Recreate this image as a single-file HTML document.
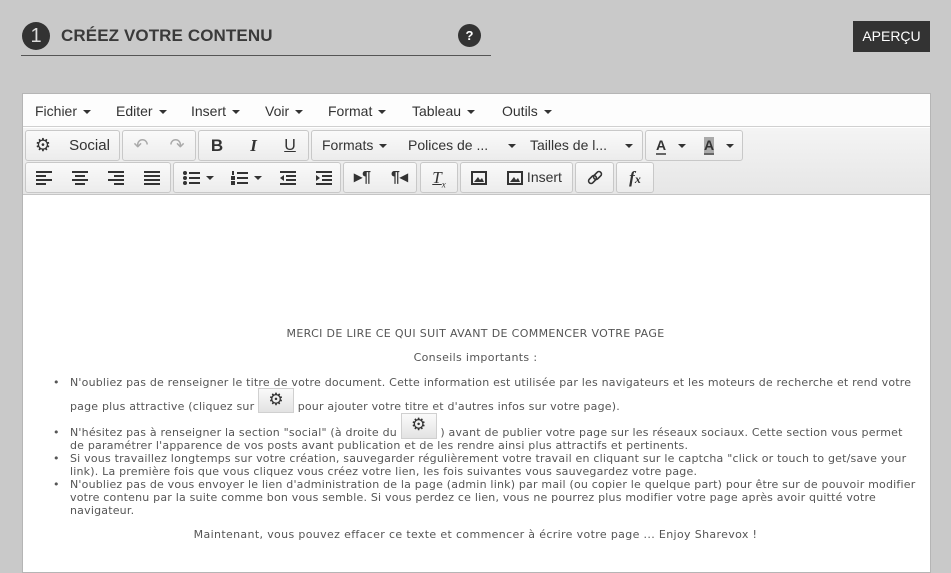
<!DOCTYPE html>
<html><head><meta charset="utf-8"><style>
*{box-sizing:border-box;margin:0;padding:0}
body{width:951px;height:570px;background:#c9c9c9;position:relative;overflow:hidden;font-family:"Liberation Sans",sans-serif}
.abs{position:absolute}
.num{left:22px;top:22px;width:28px;height:28px;border-radius:50%;background:#333;color:#ddd;font-size:20px;text-align:center;line-height:28px}
.title{left:61px;top:26px;font-size:17px;font-weight:bold;color:#3a3a3a;letter-spacing:0.1px}
.line{left:21px;top:55px;width:470px;height:1px;background:#555}
.q{left:458px;top:24px;width:23px;height:23px;border-radius:50%;background:#333;color:#fff;font-size:13px;font-weight:bold;text-align:center;line-height:23px}
.ap{left:853px;top:21px;width:77px;height:31px;background:#333;color:#fff;font-size:14px;text-align:center;line-height:31px}
.ed{left:22px;top:93px;width:909px;height:480px;background:#fff;border:1px solid #b5b5b5}
.menu{left:23px;top:94px;width:907px;height:33px;background:#fdfdfd;border-bottom:1px solid #d0d0d0}
.menu span{position:absolute;top:9px;font-size:14px;color:#333}
.car{display:inline-block;width:0;height:0;border-left:4px solid transparent;border-right:4px solid transparent;border-top:4px solid #333;vertical-align:middle;margin-left:6px}
.tb{left:23px;top:128px;width:907px;height:67px;background:linear-gradient(#f4f4f4,#e6e6e6);border-bottom:1px solid #c5c5c5}
.g{position:absolute;height:31px;border:1px solid #c8c8c8;border-radius:3px;background:linear-gradient(#fafafa,#ececec)}
.b{position:absolute;top:0;height:29px;line-height:29px;font-size:14px;color:#333;text-align:center}
.b svg{vertical-align:middle}
.ct{position:absolute;left:0;top:0;width:951px;color:#555;font-family:"DejaVu Sans",Verdana,sans-serif;font-size:11px;letter-spacing:0.35px}
.t{position:absolute;left:70px;white-space:nowrap;line-height:13px;letter-spacing:0.2px}
.dot{position:absolute;left:53px;line-height:13px}
.gw{display:inline-block;width:36px;height:13px;position:relative;vertical-align:top}
.gear{position:absolute;left:0;width:36px;background:linear-gradient(#fafafa,#e3e3e3);border:1px solid #d0d0d0;text-align:center;font-size:17px;color:#333;letter-spacing:0}
</style></head><body>
<div class="abs num">1</div>
<div class="abs title">CRÉEZ VOTRE CONTENU</div>
<div class="abs line"></div>
<div class="abs q">?</div>
<div class="abs ap">APERÇU</div>
<div class="abs ed"></div>
<div class="abs menu">
<span style="left:12px">Fichier<i class="car"></i></span>
<span style="left:93px">Editer<i class="car"></i></span>
<span style="left:168px">Insert<i class="car"></i></span>
<span style="left:242px">Voir<i class="car"></i></span>
<span style="left:305px">Format<i class="car"></i></span>
<span style="left:389px">Tableau<i class="car"></i></span>
<span style="left:479px">Outils<i class="car"></i></span>
</div>
<div class="abs tb">
<div class="g" style="left:2px;top:2px;width:95px"><div class="b" style="left:0;width:34px;font-size:18px">⚙</div><div class="b" style="left:34px;width:59px;font-size:15px">Social</div></div>
<div class="g" style="left:99px;top:2px;width:74px"><div class="b" style="left:0;width:36px;color:#aaa;font-size:18px">↶</div><div class="b" style="left:36px;width:36px;color:#aaa;font-size:18px">↷</div></div>
<div class="g" style="left:175px;top:2px;width:111px"><div class="b" style="left:0;width:36px;font-weight:bold;font-size:17px">B</div><div class="b" style="left:36px;width:37px;font-style:italic;font-weight:bold;font-size:17px;font-family:'Liberation Serif',serif">I</div><div class="b" style="left:73px;width:36px;text-decoration:underline;font-size:16px">U</div></div>
<div class="g" style="left:288px;top:2px;width:332px"><div class="b" style="left:0;width:86px;text-align:left;padding-left:10px">Formats<i class="car"></i></div><div class="b" style="left:86px;width:122px;text-align:left;padding-left:10px">Polices de ... <i class="car" style="margin-left:16px"></i></div><div class="b" style="left:208px;width:122px;text-align:left;padding-left:10px">Tailles de l... <i class="car" style="margin-left:14px"></i></div></div>
<div class="g" style="left:622px;top:2px;width:98px"><div class="b" style="left:10px;width:40px;text-align:left;font-weight:bold"><span style="border-bottom:2px solid #666">A</span><i class="car" style="margin-left:12px"></i></div><div class="b" style="left:58px;width:40px;text-align:left;font-weight:bold"><span style="background:#aaa;border-bottom:2px solid #666">A</span><i class="car" style="margin-left:12px"></i></div></div>
<div class="g" style="left:2px;top:34px;width:146px">
<div class="b" style="left:0;width:36px"><svg width="16" height="14"><g fill="#333"><rect x="0" y="0" width="16" height="2"/><rect x="0" y="4" width="10" height="2"/><rect x="0" y="8" width="16" height="2"/><rect x="0" y="12" width="10" height="2"/></g></svg></div>
<div class="b" style="left:36px;width:36px"><svg width="16" height="14"><g fill="#333"><rect x="0" y="0" width="16" height="2"/><rect x="3" y="4" width="10" height="2"/><rect x="0" y="8" width="16" height="2"/><rect x="3" y="12" width="10" height="2"/></g></svg></div>
<div class="b" style="left:72px;width:36px"><svg width="16" height="14"><g fill="#333"><rect x="0" y="0" width="16" height="2"/><rect x="6" y="4" width="10" height="2"/><rect x="0" y="8" width="16" height="2"/><rect x="6" y="12" width="10" height="2"/></g></svg></div>
<div class="b" style="left:108px;width:36px"><svg width="16" height="14"><g fill="#333"><rect x="0" y="0" width="16" height="2"/><rect x="0" y="4" width="16" height="2"/><rect x="0" y="8" width="16" height="2"/><rect x="0" y="12" width="16" height="2"/></g></svg></div>
</div>
<div class="g" style="left:150px;top:34px;width:168px">
<div class="b" style="left:0;width:48px"><svg width="17" height="14"><g fill="#333"><circle cx="2" cy="2" r="2"/><circle cx="2" cy="7" r="2"/><circle cx="2" cy="12" r="2"/><rect x="6" y="1" width="11" height="2"/><rect x="6" y="6" width="11" height="2"/><rect x="6" y="11" width="11" height="2"/></g></svg><i class="car"></i></div>
<div class="b" style="left:48px;width:48px"><svg width="17" height="14"><g fill="#333"><rect x="1" y="0" width="2" height="4"/><rect x="0" y="5" width="4" height="4"/><rect x="0" y="10" width="4" height="4"/><rect x="6" y="1" width="11" height="2"/><rect x="6" y="6" width="11" height="2"/><rect x="6" y="11" width="11" height="2"/></g></svg><i class="car"></i></div>
<div class="b" style="left:96px;width:36px"><svg width="16" height="14"><g fill="#333"><rect x="0" y="0" width="16" height="2"/><rect x="6" y="4" width="10" height="2"/><rect x="6" y="8" width="10" height="2"/><rect x="0" y="12" width="16" height="2"/><path d="M4 4V10L0 7Z"/></g></svg></div>
<div class="b" style="left:132px;width:36px"><svg width="16" height="14"><g fill="#333"><rect x="0" y="0" width="16" height="2"/><rect x="6" y="4" width="10" height="2"/><rect x="6" y="8" width="10" height="2"/><rect x="0" y="12" width="16" height="2"/><path d="M0 4V10L4 7Z"/></g></svg></div>
</div>
<div class="g" style="left:320px;top:34px;width:74px"><div class="b" style="left:0;width:37px;font-weight:bold;font-size:16px">▸¶</div><div class="b" style="left:37px;width:37px;font-weight:bold;font-size:16px">¶◂</div></div>
<div class="g" style="left:397px;top:34px;width:38px"><div class="b" style="left:0;width:36px;font-style:italic;font-family:'Liberation Serif',serif;font-size:17px;text-decoration:underline">T<sub style="font-size:9px">x</sub></div></div>
<div class="g" style="left:437px;top:34px;width:113px">
<div class="b" style="left:0;width:36px"><svg width="16" height="14"><rect x="1" y="1" width="14" height="12" fill="none" stroke="#333" stroke-width="2"/><path d="M3 11L7 6L9 9L11 7L13 11Z" fill="#333"/></svg></div>
<div class="b" style="left:36px;width:75px;font-size:14px"><svg width="16" height="14"><rect x="1" y="1" width="14" height="12" fill="none" stroke="#333" stroke-width="2"/><path d="M3 11L7 6L9 9L11 7L13 11Z" fill="#333"/></svg> Insert</div></div>
<div class="g" style="left:552px;top:34px;width:39px"><div class="b" style="left:0;width:37px"><svg width="16" height="16"><g fill="none" stroke="#333" stroke-width="1.6"><rect x="1" y="7" width="9" height="5" rx="2.5" transform="rotate(-45 5.5 9.5)"/><rect x="6" y="3" width="9" height="5" rx="2.5" transform="rotate(-45 10.5 5.5)"/></g></svg></div></div>
<div class="g" style="left:593px;top:34px;width:38px"><div class="b" style="left:0;width:36px;font-style:italic;font-weight:bold;font-family:'Liberation Serif',serif;font-size:17px">f<span style="font-size:12px">x</span></div></div>
</div>
<div class="ct">
<div style="position:absolute;top:327px;width:951px;left:0;text-align:center">MERCI DE LIRE CE QUI SUIT AVANT DE COMMENCER VOTRE PAGE</div>
<div style="position:absolute;top:351px;width:951px;left:0;text-align:center">Conseils importants :</div>
<div class="dot" style="top:376px">•</div>
<div class="t" style="top:376px">N'oubliez pas de renseigner le titre de votre document. Cette information est utilisée par les navigateurs et les moteurs de recherche et rend votre</div>
<div class="t" style="top:400px">page plus attractive (cliquez sur <span class="gw"><span class="gear" style="top:-12px;height:25px;line-height:23px">⚙</span></span> pour ajouter votre titre et d'autres infos sur votre page).</div>
<div class="dot" style="top:426px">•</div>
<div class="t" style="top:426px">N'hésitez pas à renseigner la section "social" (à droite du <span class="gw"><span class="gear" style="top:-13px;height:26px;line-height:23px">⚙</span></span> ) avant de publier votre page sur les réseaux sociaux. Cette section vous permet</div>
<div class="t" style="top:439px">de paramétrer l'apparence de vos posts avant publication et de les rendre ainsi plus attractifs et pertinents.</div>
<div class="dot" style="top:452px">•</div>
<div class="t" style="top:452px">Si vous travaillez longtemps sur votre création, sauvegarder régulièrement votre travail en cliquant sur le captcha "click or touch to get/save your</div>
<div class="t" style="top:465px">link). La première fois que vous cliquez vous créez votre lien, les fois suivantes vous sauvegardez votre page.</div>
<div class="dot" style="top:478px">•</div>
<div class="t" style="top:478px">N'oubliez pas de vous envoyer le lien d'administration de la page (admin link) par mail (ou copier le quelque part) pour être sur de pouvoir modifier</div>
<div class="t" style="top:491px">votre contenu par la suite comme bon vous semble. Si vous perdez ce lien, vous ne pourrez plus modifier votre page après avoir quitté votre</div>
<div class="t" style="top:504px">navigateur.</div>
<div style="position:absolute;top:528px;width:951px;left:0;text-align:center">Maintenant, vous pouvez effacer ce texte et commencer à écrire votre page ... Enjoy Sharevox !</div>
</div>
</body></html>
